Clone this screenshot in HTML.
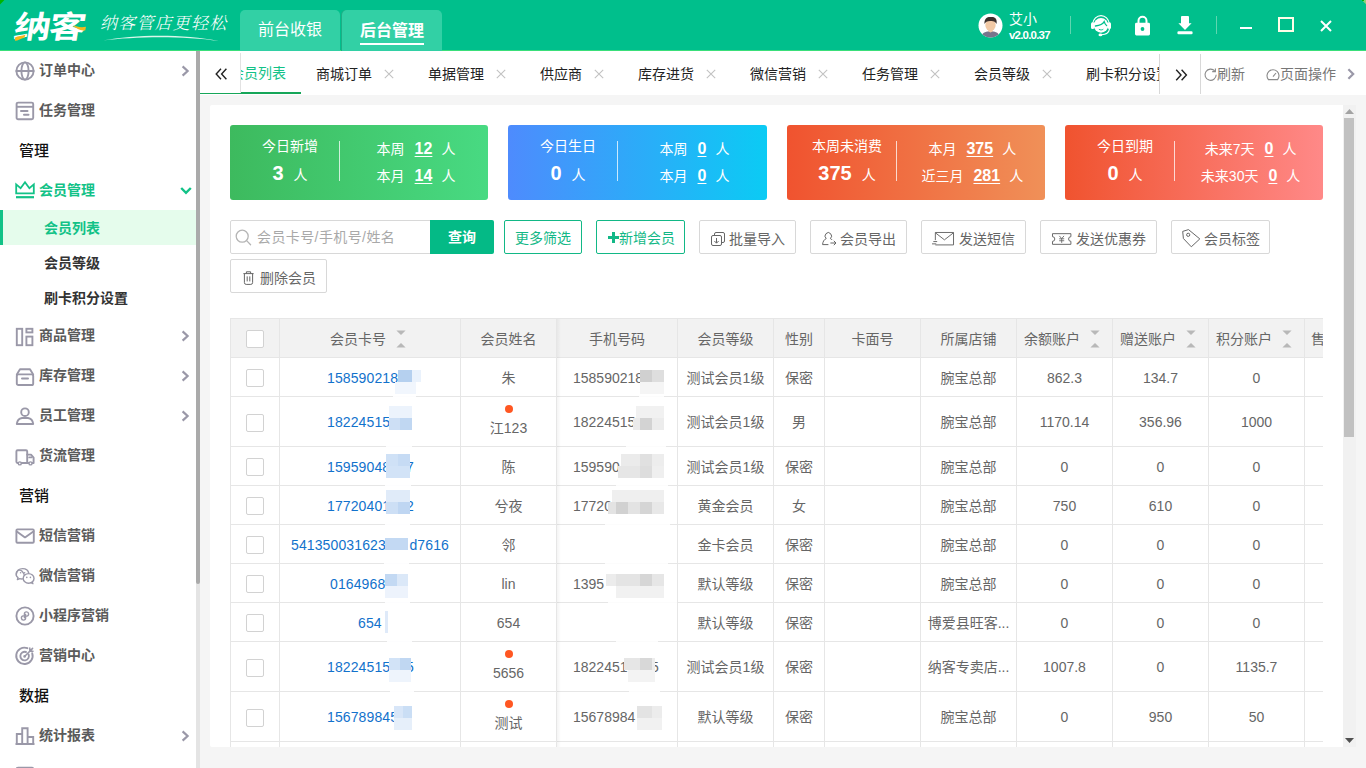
<!DOCTYPE html>
<html lang="zh-CN">
<head>
<meta charset="utf-8">
<title>纳客 - 会员列表</title>
<style>
*{box-sizing:border-box;margin:0;padding:0}
html,body{width:1366px;height:768px;overflow:hidden;background:#f5f5f5}
body{font-family:"Liberation Sans","Noto Sans CJK SC",sans-serif;font-size:14px;color:#666;position:relative}
.abs{position:absolute}
svg{display:block;overflow:visible}
/* header */
#hd{position:absolute;left:0;top:0;width:1366px;height:51px;background:#00bf8c;border-bottom:1px solid #3adf7a}
.logo{position:absolute;left:14px;top:6px;font-size:37px;line-height:44px;font-weight:700;color:#fff;letter-spacing:-2px;font-family:"Liberation Sans","Noto Sans CJK SC",sans-serif;transform:skewX(-9deg) scaleY(.84);transform-origin:left center;white-space:nowrap}
.slogan{position:absolute;left:100px;top:12px;font-size:17px;line-height:24px;color:#fff;font-family:"Liberation Serif","Noto Serif CJK SC",serif;font-style:italic;letter-spacing:1.2px;font-weight:300;white-space:nowrap}
.htab{position:absolute;top:10px;height:41px;width:99px;border-radius:5px 5px 0 0;color:#fff;font-size:16px;line-height:40px;text-align:center}
.htab span{display:inline-block;line-height:22px}
.uname{position:absolute;left:1009px;top:9px;font-size:14px;line-height:20px;color:#fff}
.uver{position:absolute;left:1009px;top:28px;font-size:11.5px;line-height:14px;color:#fff;font-weight:700;letter-spacing:-.8px}
.hsep{position:absolute;top:16px;width:1px;height:18px;background:#5fd6b0}
/* sidebar */
#sb{position:absolute;left:0;top:51px;width:196px;height:717px;background:#fff;overflow:hidden}
.mi{position:absolute;left:0;width:196px;height:40px;line-height:40px;font-weight:700;color:#5a5a5a;font-size:14px;padding-left:39px;white-space:nowrap}
.mi svg{position:absolute;left:15px;top:11px}
.mh{position:absolute;left:19px;height:40px;line-height:41px;font-weight:500;color:#111;font-size:15px}
.ms{position:absolute;left:0;width:196px;height:35px;line-height:37px;font-weight:700;color:#333;font-size:14px;padding-left:44px}
.mi svg.arr{position:absolute;left:180px;top:15px}
/* tab bar */
#tb{position:absolute;left:200px;top:51px;width:1166px;height:44px;background:#fff}
.tab{position:absolute;top:1.5px;height:43px;line-height:43px;font-size:14px;color:#222;white-space:nowrap}
.tx{position:absolute;top:16.5px}

/* main */
#pn{position:absolute;left:210px;top:105px;width:1133px;height:642px;background:#fff;border-radius:2px 0 0 2px;overflow:hidden}
.card{position:absolute;top:20px;height:75px;border-radius:3px;color:#fff;font-size:14px}
.card div{position:absolute;white-space:nowrap;line-height:20px}
.card b{font-weight:700;font-size:20px;margin-right:10px}
.card u{font-weight:700;font-size:16px;text-decoration:underline;text-underline-offset:2px;margin:0 9px 0 10px}
.card i{position:absolute;left:109px;top:16px;width:1px;height:40px;background:rgba(255,255,255,.75)}
.btn{position:absolute;height:34px;line-height:36px;border:1px solid #d8d8d8;border-radius:2px;background:#fff;color:#666;font-size:14px;white-space:nowrap;padding-left:29px}
.btn svg{position:absolute;top:8px;left:11px}
.btn.g{border-color:#12b886;color:#12b886;padding:0;text-align:center;font-size:13px}
/* table */
#tbl{position:absolute;left:20px;top:213px;width:1093px;height:429px;border-left:1px solid #e6e6e6;border-top:1px solid #e6e6e6;overflow:hidden}
.tr{position:absolute;left:0;width:1200px;border-bottom:1px solid #e6e6e6}
.tr.h{background:#f2f2f2;height:39px;top:0}
.td{position:absolute;top:0;height:100%;border-right:1px solid #e6e6e6;text-align:center;font-size:14px;color:#666;white-space:nowrap;overflow:hidden}
.td span{position:absolute;left:0;right:0;top:50%;margin-top:-9px;line-height:20px}
.tr.t .td span{margin-top:-10px}
.td em{display:inline-block;height:1px}
#mos p{position:absolute}
.td a{color:#1272cc;letter-spacing:.12px}
.ck{position:absolute;left:15px;top:50%;margin-top:-8px;width:18px;height:18px;border:1px solid #d2d2d2;border-radius:2px;background:#fff}
.dot{position:absolute;left:50%;margin-left:-4px;top:8px;width:8px;height:8px;border-radius:50%;background:#ff5722}
.sort{position:absolute;top:11px}
</style>
</head>
<body>
<div id="hd">
  <div class="logo">纳客</div>
  <svg class="abs" style="left:14px;top:24px" width="74" height="18" viewBox="0 0 74 18"><path d="M1 13.6 C4 11.6 8 12.4 11.6 10.6 L10.4 13.4 C7 14.4 4 16.6 1 16.8Z" fill="#f5b81f"/><path d="M59 1.8 C62 1.4 65 4.4 72 2.8 L71.2 6.4 C66 7.4 63 4.4 59 1.8Z" fill="#f5b81f"/></svg>
  <div class="slogan">纳客管店更轻松</div>
  <svg class="abs" style="left:103px;top:34px" width="118" height="8" viewBox="0 0 118 8"><path d="M0 6.5 C30 0.5 80 -0.5 116 7 C80 1.5 30 2.5 0 6.5Z" fill="#d9f7ea"/></svg>
  <div class="htab" style="left:240px;width:100px;background:#32d0a5">前台收银</div>
  <div class="htab" style="left:342px;width:100px;background:#32d0a5;font-weight:700;box-shadow:-1px 0 0 #1fae84"><span style="border-bottom:2px solid #fff;height:25px;position:relative;top:1px">后台管理</span></div>
  <!-- avatar -->
  <svg class="abs" style="left:978px;top:13px" width="25" height="25" viewBox="0 0 25 25">
    <defs><clipPath id="avc"><circle cx="12.5" cy="12.5" r="12"/></clipPath></defs>
    <circle cx="12.5" cy="12.5" r="12" fill="#fff"/>
    <g clip-path="url(#avc)">
      <rect x="10.3" y="15" width="4.4" height="5" fill="#f2c9a5"/><path d="M3 25 C3 19.5 8 18.6 10.4 18.4 L12.5 19.6 L14.6 18.4 C17 18.6 22 19.5 22 25Z" fill="#77758c"/>
      <ellipse cx="12.5" cy="12" rx="5.2" ry="6" fill="#f2c9a5"/>
      <path d="M6.5 11 C6 5 10 3.5 13 4 C17 3.5 19.5 6 18.5 11 C17.5 8.5 15 7.5 12 8 C9 8 7.5 9 6.5 11Z" fill="#3b2f2c"/>
    </g>
  </svg>
  <div class="uname">艾小</div>
  <div class="uver">v2.0.0.37</div>

  <!-- headset -->
  <svg class="abs" style="left:1090px;top:13px" width="22" height="24" viewBox="0 0 22 24" fill="none">
    <path d="M2.6 11 A8.5 10 0 0 1 19.4 11" stroke="#fff" stroke-width="1.2"/>
    <circle cx="11" cy="12.4" r="7.3" fill="#fff"/>
    <rect x="1" y="9.2" width="3.2" height="6.8" rx="1.5" fill="#fff"/>
    <rect x="17.8" y="9.2" width="3.2" height="6.8" rx="1.5" fill="#fff"/>
    <path d="M5.4 13 C8.6 12.6 12.6 11.6 14.2 8.6 C14.8 10.6 15.8 12 16.6 12.6" stroke="#00bf8c" stroke-width="1.3" stroke-linecap="round"/>
    <path d="M9.2 16.4 C10.4 17.2 11.8 17.2 13 16.4" stroke="#00bf8c" stroke-width=".9" stroke-linecap="round"/>
    <path d="M19.6 15.6 C19 19.4 15.6 21.6 11.4 21.8" stroke="#fff" stroke-width="1.1"/>
    <ellipse cx="10.4" cy="21.9" rx="1.9" ry="1.4" fill="#fff"/>
  </svg>
  <!-- lock -->
  <svg class="abs" style="left:1135px;top:15px" width="15" height="21" viewBox="0 0 15 21" fill="none">
    <path d="M3.5 9 V5.8 a4 4 0 0 1 8 0 V9" stroke="#fff" stroke-width="2"/>
    <rect x="0" y="7.8" width="15" height="12.7" rx="1.4" fill="#fff"/>
    <circle cx="7.5" cy="14" r="1.9" fill="#00bf8c"/>
  </svg>
  <!-- download -->
  <svg class="abs" style="left:1177px;top:16px" width="16" height="19" viewBox="0 0 16 19">
    <path d="M5 0 h6 a1 1 0 0 1 1 1 v6.3 h2.6 L8 14 L1.4 7.3 h2.6 v-6.3 a1 1 0 0 1 1 -1Z" fill="#fff"/>
    <rect x=".4" y="15.3" width="15.2" height="2.9" rx="1.2" fill="#fff"/>
  </svg>
  <!-- window controls -->
  <div class="abs" style="left:1240px;top:27px;width:12px;height:2px;background:#fff"></div>
  <div class="abs" style="left:1278px;top:17px;width:16px;height:15px;border:2px solid #fffde8"></div>
  <svg class="abs" style="left:1320px;top:20px" width="12" height="12" viewBox="0 0 12 12"><path d="M1 1 L11 11 M11 1 L1 11" stroke="#fff" stroke-width="2"/></svg>
  <div class="hsep" style="left:1070px"></div>
  <div class="hsep" style="left:1216px"></div>
</div>

<svg class="abs" style="left:0;top:0" width="5" height="5" viewBox="0 0 5 5"><path d="M0 0 H4.4 L0 4.4Z" fill="#00b400"/></svg>
<svg class="abs" style="left:1361px;top:0" width="5" height="5" viewBox="0 0 5 5"><path d="M.8 0 H5 V4.2Z" fill="#8fd07a"/><rect x="1" y="0" width="2" height="1" fill="#00b400"/></svg>
<div id="sb">
  <div class="mi" style="top:-1px"><svg width="20" height="20" viewBox="0 0 20 20" fill="none" stroke="#9a98a8" stroke-width="1.9" stroke-linecap="round" stroke-linejoin="round"><circle cx="10" cy="10" r="8.6"/><ellipse cx="10" cy="10" rx="3.6" ry="8.6"/><path d="M1.4 10 H18.6"/></svg>订单中心<svg class="arr" width="10" height="12" viewBox="0 0 10 12" fill="none" stroke="#9a98a8" stroke-width="2.2"><path d="M2.6 1.4 L7.6 6 L2.6 10.6"/></svg></div>
  <div class="mi" style="top:39px"><svg width="20" height="20" viewBox="0 0 20 20" fill="none" stroke="#9a98a8" stroke-width="1.9" stroke-linecap="round" stroke-linejoin="round"><rect x="1.6" y="1.6" width="16.6" height="16.6" rx="1.5"/><path d="M1.6 5.8 H18.2" stroke-linecap="butt"/><path d="M6 10 H12.5 M9 13.8 H13.5" stroke-width="2"/></svg>任务管理</div>
  <div class="mh" style="top:79px">管理</div>
  <div class="mi" style="top:119px;color:#12c287"><svg width="20" height="20" viewBox="0 0 20 20" fill="none" stroke="#9a98a8" stroke-width="1.9" stroke-linecap="round" stroke-linejoin="round"><path d="M1.2 12.4 V3.4 L5.6 7.2 L10 1.2 L14.4 7.2 L18.8 3.4 V12.4 Z" stroke="#12c287" stroke-linejoin="miter" stroke-width="1.8"/><path d="M1 16.2 H19" stroke="#12c287" stroke-width="2.2" stroke-linecap="butt"/></svg>会员管理<svg class="arr" style="top:16px" width="12" height="10" viewBox="0 0 12 10" fill="none" stroke="#12c287" stroke-width="2.4"><path d="M1.2 2 L6 6.8 L10.8 2"/></svg></div>
  <div class="ms" style="top:159.0px;background:#e5fcec;color:#12c287;border-left:3px solid #12c287;padding-left:41px">会员列表</div>
  <div class="ms" style="top:194.0px">会员等级</div>
  <div class="ms" style="top:229.0px">刷卡积分设置</div>
  <div class="mi" style="top:264px"><svg width="20" height="20" viewBox="0 0 20 20" fill="none" stroke="#9a98a8" stroke-width="1.9" stroke-linecap="round" stroke-linejoin="round" style="stroke-linejoin:miter;top:12px"><rect x="1.8" y="1.8" width="5.4" height="16.4"/><rect x="11.4" y="1.8" width="6" height="3.6"/><rect x="11.4" y="9.6" width="6" height="8.6"/></svg>商品管理<svg class="arr" width="10" height="12" viewBox="0 0 10 12" fill="none" stroke="#9a98a8" stroke-width="2.2"><path d="M2.6 1.4 L7.6 6 L2.6 10.6"/></svg></div>
  <div class="mi" style="top:304px"><svg style="top:12px" width="20" height="20" viewBox="0 0 20 20" fill="none" stroke="#9a98a8" stroke-width="1.9" stroke-linecap="round" stroke-linejoin="round"><path d="M1.8 7.4 L5 2.2 H15 L18.2 7.4"/><rect x="1.8" y="7.4" width="16.4" height="10.6" rx="1.6"/><path d="M7 11.6 H13" stroke-width="2"/></svg>库存管理<svg class="arr" width="10" height="12" viewBox="0 0 10 12" fill="none" stroke="#9a98a8" stroke-width="2.2"><path d="M2.6 1.4 L7.6 6 L2.6 10.6"/></svg></div>
  <div class="mi" style="top:344px"><svg width="20" height="20" viewBox="0 0 20 20" fill="none" stroke="#9a98a8" stroke-width="1.9" stroke-linecap="round" stroke-linejoin="round"><circle cx="10" cy="6.2" r="3.8"/><path d="M1.8 18 C2.4 13.6 5.4 12.2 7 12 H13 C14.6 12.2 17.6 13.6 18.2 18 Z"/></svg>员工管理<svg class="arr" width="10" height="12" viewBox="0 0 10 12" fill="none" stroke="#9a98a8" stroke-width="2.2"><path d="M2.6 1.4 L7.6 6 L2.6 10.6"/></svg></div>
  <div class="mi" style="top:384px"><svg style="top:12px" width="20" height="20" viewBox="0 0 20 20" fill="none" stroke="#9a98a8" stroke-width="1.9" stroke-linecap="round" stroke-linejoin="round"><path d="M3 16 H2.6 a1.2 1.2 0 0 1 -1.2 -1.2 V4.4 a1.2 1.2 0 0 1 1.2 -1.2 H11 a1.2 1.2 0 0 1 1.2 1.2 V16 H6.6"/><path d="M12.2 7.6 H16 L18.6 10.6 V16 H17.6 M13.4 16 H12.2"/><path d="M14.2 10.4 h2.2" /><circle cx="4.8" cy="16.4" r="1.5" stroke-width="1.4"/><circle cx="15.5" cy="16.4" r="1.5" stroke-width="1.4"/></svg>货流管理</div>
  <div class="mh" style="top:424px">营销</div>
  <div class="mi" style="top:464px"><svg width="20" height="20" viewBox="0 0 20 20" fill="none" stroke="#9a98a8" stroke-width="1.9" stroke-linecap="round" stroke-linejoin="round"><rect x="1.4" y="3.4" width="17.4" height="13.4" rx="1"/><path d="M1.8 5.4 L10 11.4 L18.4 5.4"/></svg>短信营销</div>
  <div class="mi" style="top:504px"><svg width="20" height="20" viewBox="0 0 20 20" fill="none" stroke="#9a98a8" stroke-width="1.9" stroke-linecap="round" stroke-linejoin="round"><path d="M9.6 11.6 C9.4 8 5.6 2.4 2 6.6 C0.4 9.4 1.6 11.6 3 12.6 L2.4 14.6 L4.8 13.6 C5.6 13.9 6.6 14 7.6 13.9" stroke-width="1.4" transform="translate(0,-1)"/><path d="M1.4 8.2 C1.4 4.8 4.2 2.6 7.6 2.6 C10.6 2.6 13.2 4.4 13.7 7" stroke-width="1.4"/><ellipse cx="13.6" cy="12.4" rx="5.4" ry="4.8" stroke-width="1.4" fill="#fff"/><path d="M15.8 16.6 L18 17.8 L17.4 15.8" stroke-width="1.2"/><circle cx="5.6" cy="6.8" r=".8" fill="#9a98a8" stroke="none"/><circle cx="9.6" cy="6.8" r=".8" fill="#9a98a8" stroke="none"/><circle cx="11.8" cy="11.4" r=".8" fill="#9a98a8" stroke="none"/><circle cx="15.4" cy="11.4" r=".8" fill="#9a98a8" stroke="none"/></svg>微信营销</div>
  <div class="mi" style="top:544px"><svg width="20" height="20" viewBox="0 0 20 20" fill="none" stroke="#9a98a8" stroke-width="1.9" stroke-linecap="round" stroke-linejoin="round"><circle cx="10" cy="10" r="8.6"/><path d="M10.6 8.4 V12 a2.1 2.1 0 1 1 -2.4 -2.1 M9.4 11.6 V8 a2.1 2.1 0 1 1 2.4 2.1" stroke-width="1.4"/></svg>小程序营销</div>
  <div class="mi" style="top:584px"><svg width="20" height="20" viewBox="0 0 20 20" fill="none" stroke="#9a98a8" stroke-width="1.9" stroke-linecap="round" stroke-linejoin="round"><path d="M17.2 7.2 A8.2 8.2 0 1 1 12.4 2.2"/><path d="M13.6 8.4 A4.3 4.3 0 1 1 11 6"/><circle cx="9.6" cy="10.4" r="1.3" fill="#9a98a8" stroke="none"/><path d="M9.8 10.2 L17.6 2.4 M14.8 2 V5.2 H18" stroke-width="1.5"/></svg>营销中心</div>
  <div class="mh" style="top:624px">数据</div>
  <div class="mi" style="top:664px"><svg width="20" height="20" viewBox="0 0 20 20" fill="none" stroke="#9a98a8" stroke-width="1.9" stroke-linecap="round" stroke-linejoin="round"><path d="M1.8 18 V8 H7.2 V2.2 H12.6 V18 M12.6 11 H18.2 V18 M7.2 8 V18 M1.2 18 H18.8" stroke-linejoin="miter"/></svg>统计报表<svg class="arr" width="10" height="12" viewBox="0 0 10 12" fill="none" stroke="#9a98a8" stroke-width="2.2"><path d="M2.6 1.4 L7.6 6 L2.6 10.6"/></svg></div>
  <div class="mi" style="top:704px"><svg width="20" height="20" viewBox="0 0 20 20" fill="none" stroke="#9a98a8" stroke-width="1.9" stroke-linecap="round" stroke-linejoin="round"><rect x="1.6" y="1.6" width="16.6" height="16.6" rx="1.5"/><path d="M1.6 5.8 H18.2" stroke-linecap="butt"/><path d="M6 10 H12.5 M9 13.8 H13.5" stroke-width="2"/></svg><svg class="arr" width="10" height="12" viewBox="0 0 10 12" fill="none" stroke="#9a98a8" stroke-width="2.2"><path d="M2.6 1.4 L7.6 6 L2.6 10.6"/></svg></div>
</div>
<div class="abs" style="left:196px;top:51px;width:4px;height:717px;background:#e4e4e4"></div>
<div class="abs" style="left:196px;top:51px;width:4px;height:533px;background:#aaa;border-radius:0 0 2px 2px"></div>

<div id="tb">
  <div class="abs" style="left:0;top:0;width:960px;height:43px;overflow:hidden">
    <div class="tab" style="left:15px;top:1px;width:86px;padding-left:15px;color:#12c287">会员列表</div>
    <div class="tab" style="left:101px;width:112px;padding-left:15px">商城订单<svg class="tx" style="left:83px" width="10" height="10" viewBox="0 0 10 10"><path d="M.8 .8 L9.2 9.2 M9.2 .8 L.8 9.2" stroke="#c2c2c2" stroke-width="1.1"/></svg></div>
    <div class="tab" style="left:213px;width:112px;padding-left:15px">单据管理<svg class="tx" style="left:83px" width="10" height="10" viewBox="0 0 10 10"><path d="M.8 .8 L9.2 9.2 M9.2 .8 L.8 9.2" stroke="#c2c2c2" stroke-width="1.1"/></svg></div>
    <div class="tab" style="left:325px;width:98px;padding-left:15px">供应商<svg class="tx" style="left:69px" width="10" height="10" viewBox="0 0 10 10"><path d="M.8 .8 L9.2 9.2 M9.2 .8 L.8 9.2" stroke="#c2c2c2" stroke-width="1.1"/></svg></div>
    <div class="tab" style="left:423px;width:112px;padding-left:15px">库存进货<svg class="tx" style="left:83px" width="10" height="10" viewBox="0 0 10 10"><path d="M.8 .8 L9.2 9.2 M9.2 .8 L.8 9.2" stroke="#c2c2c2" stroke-width="1.1"/></svg></div>
    <div class="tab" style="left:535px;width:112px;padding-left:15px">微信营销<svg class="tx" style="left:83px" width="10" height="10" viewBox="0 0 10 10"><path d="M.8 .8 L9.2 9.2 M9.2 .8 L.8 9.2" stroke="#c2c2c2" stroke-width="1.1"/></svg></div>
    <div class="tab" style="left:647px;width:112px;padding-left:15px">任务管理<svg class="tx" style="left:83px" width="10" height="10" viewBox="0 0 10 10"><path d="M.8 .8 L9.2 9.2 M9.2 .8 L.8 9.2" stroke="#c2c2c2" stroke-width="1.1"/></svg></div>
    <div class="tab" style="left:759px;width:112px;padding-left:15px">会员等级<svg class="tx" style="left:83px" width="10" height="10" viewBox="0 0 10 10"><path d="M.8 .8 L9.2 9.2 M9.2 .8 L.8 9.2" stroke="#c2c2c2" stroke-width="1.1"/></svg></div>
    <div class="tab" style="left:871px;width:140px;padding-left:15px">刷卡积分设置<svg class="tx" style="left:111px" width="10" height="10" viewBox="0 0 10 10"><path d="M.8 .8 L9.2 9.2 M9.2 .8 L.8 9.2" stroke="#c2c2c2" stroke-width="1.1"/></svg></div>
  </div>
  <div class="abs" style="left:0;top:41px;width:101px;height:2px;background:#16a659"></div>
  <div class="abs" style="left:0;top:0;width:41px;height:42px;background:#fff"></div><div class="abs" style="left:40px;top:2px;width:1px;height:40px;background:#e2e2e2"></div>
  <svg class="abs" style="left:15px;top:16.5px" width="13" height="12" viewBox="0 0 13 12" fill="none" stroke="#222" stroke-width="1.4"><path d="M6 .8 L1.2 6 L6 11.2 M11.4 .8 L6.6 6 L11.4 11.2"/></svg>
  <div class="abs" style="left:959px;top:3px;width:42px;height:40px;background:#fff;border-left:1px solid #d8d8d8;border-right:1px solid #d8d8d8"></div>
  <svg class="abs" style="left:974.5px;top:17.5px" width="13" height="12" viewBox="0 0 13 12" fill="none" stroke="#222" stroke-width="1.4"><path d="M1.2 .8 L6 6 L1.2 11.2 M6.6 .8 L11.4 6 L6.6 11.2"/></svg>
  <svg class="abs" style="left:1003.5px;top:16.5px" width="13" height="13" viewBox="0 0 13 13" fill="none" stroke="#8a8a8a" stroke-width="1.1"><path d="M10.8 3 A5.6 5.6 0 1 0 12.2 6.8"/><path d="M11.4 .4 V3.6 H8.2" /></svg>
  <div class="tab" style="left:1017px;top:1.5px;color:#777">刷新</div>
  <svg class="abs" style="left:1066px;top:17px" width="14" height="13" viewBox="0 0 14 13" fill="none" stroke="#8a8a8a" stroke-width="1.1"><path d="M2.4 11.6 A6 6 0 1 1 11.6 11.6 Z"/><path d="M7 8.6 L10 5"/></svg>
  <div class="tab" style="left:1080px;top:1.5px;color:#777">页面操作</div>
  <svg class="abs" style="left:1146.5px;top:16.5px" width="8" height="12" viewBox="0 0 8 12" fill="none" stroke="#9a98a8" stroke-width="2.2"><path d="M1.4 1.2 L6.2 6 L1.4 10.8"/></svg>
</div>

<div id="pn">
  <div class="card" style="left:20px;width:258px;background:linear-gradient(90deg,#3dba5e,#48da82)"><div style="left:0;width:120px;text-align:center;top:11px">今日新增</div><div style="left:0;width:120px;text-align:center;top:38px"><b>3</b>人</div><i></i><div style="left:106px;width:160px;text-align:center;top:14px">本周<u>12</u>人</div><div style="left:106px;width:160px;text-align:center;top:41px">本月<u>14</u>人</div></div>
  <div class="card" style="left:298px;width:259px;background:linear-gradient(90deg,#4e8bfd,#0bcbf4)"><div style="left:0;width:120px;text-align:center;top:11px">今日生日</div><div style="left:0;width:120px;text-align:center;top:38px"><b>0</b>人</div><i></i><div style="left:106.5px;width:160px;text-align:center;top:14px">本周<u>0</u>人</div><div style="left:106.5px;width:160px;text-align:center;top:41px">本月<u>0</u>人</div></div>
  <div class="card" style="left:577px;width:258px;background:linear-gradient(90deg,#f0532f,#f09058)"><div style="left:0;width:120px;text-align:center;top:11px">本周未消费</div><div style="left:0;width:120px;text-align:center;top:38px"><b>375</b>人</div><i></i><div style="left:105.30000000000001px;width:160px;text-align:center;top:14px">本月<u>375</u>人</div><div style="left:105.30000000000001px;width:160px;text-align:center;top:41px">近三月<u>281</u>人</div></div>
  <div class="card" style="left:855px;width:258px;background:linear-gradient(90deg,#f0532f,#ff8988)"><div style="left:0;width:120px;text-align:center;top:11px">今日到期</div><div style="left:0;width:120px;text-align:center;top:38px"><b>0</b>人</div><i></i><div style="left:105.6px;width:160px;text-align:center;top:14px">未来7天<u>0</u>人</div><div style="left:105.6px;width:160px;text-align:center;top:41px">未来30天<u>0</u>人</div></div>
  <div class="abs" style="left:20px;top:115px;width:201px;height:34px;border:1px solid #d8d8d8;border-radius:2px 0 0 2px;color:#a9a9a9;line-height:32px;padding-left:26px;white-space:nowrap;letter-spacing:.4px">会员卡号/手机号/姓名
    <svg class="abs" style="left:4px;top:8px" width="17" height="17" viewBox="0 0 17 17" fill="none" stroke="#b5b5b5" stroke-width="1.3"><circle cx="7.2" cy="7.2" r="6"/><path d="M11.6 11.6 L15.6 15.8" stroke-linecap="round"/></svg></div>
  <div class="abs" style="left:220px;top:115px;width:64px;height:34px;background:#04ba86;border-radius:0 2px 2px 0;color:#fff;font-weight:700;text-align:center;line-height:34px">查询</div>
  <div class="btn g" style="left:294px;top:115px;width:78px;height:34px;line-height:34px;font-size:14px">更多筛选</div>
  <div class="btn g" style="left:386px;top:115px;width:89px;height:34px;line-height:34px;font-size:14px;padding-left:22px;text-align:left"><svg style="left:11px;top:11px" width="11" height="11" viewBox="0 0 11 11"><path d="M4 0 h3 v4 h4 v3 h-4 v4 h-3 v-4 h-4 v-3 h4Z" fill="#12b886"/></svg>新增会员</div>
  <div class="btn" style="left:489px;top:115px;width:97px"><svg style="left:11px;top:11px" width="14" height="14" viewBox="0 0 14 14" fill="none" stroke="#666" stroke-width="1"><rect x=".5" y="3.5" width="10" height="10" rx="1.5"/><path d="M3.5 3.5 V2 a1.5 1.5 0 0 1 1.5 -1.5 H12 a1.5 1.5 0 0 1 1.5 1.5 V9 a1.5 1.5 0 0 1 -1.5 1.5 H10.5"/><path d="M5.5 6 V11 M3.4 9 L5.5 11.2 L7.6 9"/></svg>批量导入</div>
  <div class="btn" style="left:600px;top:115px;width:97px"><svg style="left:11px;top:11px" width="15" height="14" viewBox="0 0 15 14" fill="none" stroke="#666" stroke-width="1"><path d="M4.2 6.6 A3.2 3.4 0 1 1 8.4 6.6 M4.2 6.6 C2 7.6 .8 9.6 .6 12.6 H6.4 M8.4 6.6 C9.2 7 9.8 7.4 10.2 8"/><path d="M8.4 11 H14 M11.8 8.8 L14 11 L11.8 13.2"/></svg>会员导出</div>
  <div class="btn" style="left:711px;top:115px;width:105px;padding-left:37px"><svg style="left:10px;top:11px" width="22" height="13.4" viewBox="0 0 23 14" fill="none" stroke="#666" stroke-width="1"><path d="M3.5 8.5 V.5 H22.5 V13.5 H3.5"/><path d="M3.5 .8 L13 8.2 L22.5 .8"/><path d="M1.4 10 H5.4 M0 12.4 H4.4"/></svg>发送短信</div>
  <div class="btn" style="left:830px;top:115px;width:117px;padding-left:35px"><svg style="left:10.5px;top:11.5px" width="19.4" height="12" viewBox="0 0 20 12" fill="none" stroke="#666" stroke-width="1"><path d="M.5 .5 H19.5 V3.6 a2.4 2.4 0 0 0 0 4.8 V11.5 H.5 V8.4 a2.4 2.4 0 0 0 0 -4.8Z"/><path d="M7.6 2.8 L10 5.6 L12.4 2.8 M7.4 5.8 H12.6 M7.4 7.8 H12.6 M10 5.6 V10" stroke-width=".9"/></svg>发送优惠券</div>
  <div class="btn" style="left:961px;top:115px;width:99px;padding-left:32px"><svg style="left:9.5px;top:7.5px" width="19" height="19" viewBox="0 0 19 19" fill="none" stroke="#666" stroke-width="1" stroke-linejoin="round"><path d="M.7 2.4 L6.5 .6 L17.8 9.9 L9.3 17.8 L1.4 9.5Z"/><circle cx="6.2" cy="5.8" r="1.6"/></svg>会员标签</div>
  <div class="btn" style="left:20px;top:154px;width:97px;height:34px;line-height:36px"><svg style="left:11.5px;top:11px" width="11" height="14" viewBox="0 0 11 14" fill="none" stroke="#666" stroke-width="1"><path d="M.4 2.6 H10.6 M3.4 2.4 V.8 H7.6 V2.4"/><path d="M1.4 2.8 V11.6 a1.8 1.8 0 0 0 1.8 1.8 H7.8 a1.8 1.8 0 0 0 1.8 -1.8 V2.8"/><path d="M4.2 5.4 V10.4 M6.8 5.4 V10.4"/></svg>删除会员</div>
  
  <div id="tbl">
    <div class="tr h"><div class="td" style="left:0px;width:49px"><b class="ck"></b></div><div class="td" style="left:49px;width:181px"><span style="padding-right:24px">会员卡号</span><svg class="sort" style="left:116px" width="10" height="18" viewBox="0 0 10 18"><path d="M.4 .5 H9.6 L5 5Z M.4 17.5 H9.6 L5 13Z" fill="#b8b8b8"/></svg></div><div class="td" style="left:230px;width:96px"><span>会员姓名</span></div><div class="td" style="left:326px;width:121px"><span>手机号码</span></div><div class="td" style="left:447px;width:96px"><span>会员等级</span></div><div class="td" style="left:543px;width:51px"><span>性别</span></div><div class="td" style="left:594px;width:96px"><span>卡面号</span></div><div class="td" style="left:690px;width:96px"><span>所属店铺</span></div><div class="td" style="left:786px;width:96px"><span style="text-align:left;left:7px">余额账户</span><svg class="sort" style="left:73px" width="10" height="18" viewBox="0 0 10 18"><path d="M.4 .5 H9.6 L5 5Z M.4 17.5 H9.6 L5 13Z" fill="#b8b8b8"/></svg></div><div class="td" style="left:882px;width:96px"><span style="text-align:left;left:7px">赠送账户</span><svg class="sort" style="left:73px" width="10" height="18" viewBox="0 0 10 18"><path d="M.4 .5 H9.6 L5 5Z M.4 17.5 H9.6 L5 13Z" fill="#b8b8b8"/></svg></div><div class="td" style="left:978px;width:96px"><span style="text-align:left;left:7px">积分账户</span><svg class="sort" style="left:73px" width="10" height="18" viewBox="0 0 10 18"><path d="M.4 .5 H9.6 L5 5Z M.4 17.5 H9.6 L5 13Z" fill="#b8b8b8"/></svg></div><div class="td" style="left:1074px;width:96px"><span style="text-align:left;left:6px">售</span></div></div>
    <div class="tr" style="top:39px;height:39px"><div class="td" style="left:0px;width:49px"><b class="ck"></b></div><div class="td" style="left:49px;width:181px"><span style="text-align:left;left:47px"><a>158590218</a></span></div><div class="td" style="left:230px;width:96px"><span>朱</span></div><div class="td" style="left:326px;width:121px"><span style="text-align:left;left:16px">158590218</span></div><div class="td" style="left:447px;width:96px"><span>测试会员1级</span></div><div class="td" style="left:543px;width:51px"><span>保密</span></div><div class="td" style="left:594px;width:96px"></div><div class="td" style="left:690px;width:96px"><span>腕宝总部</span></div><div class="td" style="left:786px;width:96px"><span>862.3</span></div><div class="td" style="left:882px;width:96px"><span>134.7</span></div><div class="td" style="left:978px;width:96px"><span>0</span></div><div class="td" style="left:1074px;width:96px"></div></div>
    <div class="tr t" style="top:78px;height:50px"><div class="td" style="left:0px;width:49px"><b class="ck"></b></div><div class="td" style="left:49px;width:181px"><span style="text-align:left;left:47px"><a>18224515</a></span></div><div class="td" style="left:230px;width:96px"><b class="dot"></b><span style="margin-top:-4px">江123</span></div><div class="td" style="left:326px;width:121px"><span style="text-align:left;left:16px">182245155</span></div><div class="td" style="left:447px;width:96px"><span>测试会员1级</span></div><div class="td" style="left:543px;width:51px"><span>男</span></div><div class="td" style="left:594px;width:96px"></div><div class="td" style="left:690px;width:96px"><span>腕宝总部</span></div><div class="td" style="left:786px;width:96px"><span>1170.14</span></div><div class="td" style="left:882px;width:96px"><span>356.96</span></div><div class="td" style="left:978px;width:96px"><span>1000</span></div><div class="td" style="left:1074px;width:96px"></div></div>
    <div class="tr" style="top:128px;height:39px"><div class="td" style="left:0px;width:49px"><b class="ck"></b></div><div class="td" style="left:49px;width:181px"><span style="text-align:left;left:47px"><a>15959048<em style="width:15.8px"></em>7</a></span></div><div class="td" style="left:230px;width:96px"><span>陈</span></div><div class="td" style="left:326px;width:121px"><span style="text-align:left;left:16px">1595904</span></div><div class="td" style="left:447px;width:96px"><span>测试会员1级</span></div><div class="td" style="left:543px;width:51px"><span>保密</span></div><div class="td" style="left:594px;width:96px"></div><div class="td" style="left:690px;width:96px"><span>腕宝总部</span></div><div class="td" style="left:786px;width:96px"><span>0</span></div><div class="td" style="left:882px;width:96px"><span>0</span></div><div class="td" style="left:978px;width:96px"><span>0</span></div><div class="td" style="left:1074px;width:96px"></div></div>
    <div class="tr" style="top:167px;height:39px"><div class="td" style="left:0px;width:49px"><b class="ck"></b></div><div class="td" style="left:49px;width:181px"><span style="text-align:left;left:47px"><a>17720401<em style="width:15.8px"></em>2</a></span></div><div class="td" style="left:230px;width:96px"><span>兮夜</span></div><div class="td" style="left:326px;width:121px"><span style="text-align:left;left:16px">17720</span></div><div class="td" style="left:447px;width:96px"><span>黄金会员</span></div><div class="td" style="left:543px;width:51px"><span>女</span></div><div class="td" style="left:594px;width:96px"></div><div class="td" style="left:690px;width:96px"><span>腕宝总部</span></div><div class="td" style="left:786px;width:96px"><span>750</span></div><div class="td" style="left:882px;width:96px"><span>610</span></div><div class="td" style="left:978px;width:96px"><span>0</span></div><div class="td" style="left:1074px;width:96px"></div></div>
    <div class="tr" style="top:206px;height:39px"><div class="td" style="left:0px;width:49px"><b class="ck"></b></div><div class="td" style="left:49px;width:181px"><span style="text-align:left;left:11px"><a>541350031623<em style="width:23.6px"></em>d7616</a></span></div><div class="td" style="left:230px;width:96px"><span>邻</span></div><div class="td" style="left:326px;width:121px"><span style="text-align:left;left:16px"></span></div><div class="td" style="left:447px;width:96px"><span>金卡会员</span></div><div class="td" style="left:543px;width:51px"><span>保密</span></div><div class="td" style="left:594px;width:96px"></div><div class="td" style="left:690px;width:96px"><span>腕宝总部</span></div><div class="td" style="left:786px;width:96px"><span>0</span></div><div class="td" style="left:882px;width:96px"><span>0</span></div><div class="td" style="left:978px;width:96px"><span>0</span></div><div class="td" style="left:1074px;width:96px"></div></div>
    <div class="tr" style="top:245px;height:39px"><div class="td" style="left:0px;width:49px"><b class="ck"></b></div><div class="td" style="left:49px;width:181px"><span style="text-align:left;left:50px"><a>01649688</a></span></div><div class="td" style="left:230px;width:96px"><span>lin</span></div><div class="td" style="left:326px;width:121px"><span style="text-align:left;left:16px">1395</span></div><div class="td" style="left:447px;width:96px"><span>默认等级</span></div><div class="td" style="left:543px;width:51px"><span>保密</span></div><div class="td" style="left:594px;width:96px"></div><div class="td" style="left:690px;width:96px"><span>腕宝总部</span></div><div class="td" style="left:786px;width:96px"><span>0</span></div><div class="td" style="left:882px;width:96px"><span>0</span></div><div class="td" style="left:978px;width:96px"><span>0</span></div><div class="td" style="left:1074px;width:96px"></div></div>
    <div class="tr" style="top:284px;height:39px"><div class="td" style="left:0px;width:49px"><b class="ck"></b></div><div class="td" style="left:49px;width:181px"><span style="text-align:left;left:78px"><a>654</a></span></div><div class="td" style="left:230px;width:96px"><span>654</span></div><div class="td" style="left:326px;width:121px"><span style="text-align:left;left:16px"></span></div><div class="td" style="left:447px;width:96px"><span>默认等级</span></div><div class="td" style="left:543px;width:51px"><span>保密</span></div><div class="td" style="left:594px;width:96px"></div><div class="td" style="left:690px;width:96px"><span>博爱县旺客...</span></div><div class="td" style="left:786px;width:96px"><span>0</span></div><div class="td" style="left:882px;width:96px"><span>0</span></div><div class="td" style="left:978px;width:96px"><span>0</span></div><div class="td" style="left:1074px;width:96px"></div></div>
    <div class="tr t" style="top:323px;height:50px"><div class="td" style="left:0px;width:49px"><b class="ck"></b></div><div class="td" style="left:49px;width:181px"><span style="text-align:left;left:47px"><a>18224515<em style="width:15.8px"></em>5</a></span></div><div class="td" style="left:230px;width:96px"><b class="dot"></b><span style="margin-top:-4px">5656</span></div><div class="td" style="left:326px;width:121px"><span style="text-align:left;left:16px">1822451<em style="width:23.6px"></em>5</span></div><div class="td" style="left:447px;width:96px"><span>测试会员1级</span></div><div class="td" style="left:543px;width:51px"><span>保密</span></div><div class="td" style="left:594px;width:96px"></div><div class="td" style="left:690px;width:96px"><span>纳客专卖店...</span></div><div class="td" style="left:786px;width:96px"><span>1007.8</span></div><div class="td" style="left:882px;width:96px"><span>0</span></div><div class="td" style="left:978px;width:96px"><span>1135.7</span></div><div class="td" style="left:1074px;width:96px"></div></div>
    <div class="tr t" style="top:373px;height:50px"><div class="td" style="left:0px;width:49px"><b class="ck"></b></div><div class="td" style="left:49px;width:181px"><span style="text-align:left;left:47px"><a>156789845</a></span></div><div class="td" style="left:230px;width:96px"><b class="dot"></b><span style="margin-top:-4px">测试</span></div><div class="td" style="left:326px;width:121px"><span style="text-align:left;left:16px">15678984</span></div><div class="td" style="left:447px;width:96px"><span>默认等级</span></div><div class="td" style="left:543px;width:51px"><span>保密</span></div><div class="td" style="left:594px;width:96px"></div><div class="td" style="left:690px;width:96px"><span>腕宝总部</span></div><div class="td" style="left:786px;width:96px"><span>0</span></div><div class="td" style="left:882px;width:96px"><span>950</span></div><div class="td" style="left:978px;width:96px"><span>50</span></div><div class="td" style="left:1074px;width:96px"></div></div>
    <div class="tr" style="top:423px;height:39px"><div class="td" style="left:0px;width:49px"><b class="ck"></b></div><div class="td" style="left:49px;width:181px"><span style="text-align:left;left:47px"><a></a></span></div><div class="td" style="left:230px;width:96px"><span></span></div><div class="td" style="left:326px;width:121px"><span style="text-align:left;left:16px"></span></div><div class="td" style="left:447px;width:96px"><span></span></div><div class="td" style="left:543px;width:51px"><span></span></div><div class="td" style="left:594px;width:96px"></div><div class="td" style="left:690px;width:96px"><span></span></div><div class="td" style="left:786px;width:96px"><span></span></div><div class="td" style="left:882px;width:96px"><span></span></div><div class="td" style="left:978px;width:96px"><span></span></div><div class="td" style="left:1074px;width:96px"></div></div>
    <div class="abs" style="left:326px;top:0;width:4px;height:430px;background:linear-gradient(90deg,rgba(0,0,0,.045),rgba(0,0,0,0))"></div><div id="mos"><p style="left:162px;top:77px;width:23px;height:1px;background:#fdfdfe"></p><p style="left:155px;top:127px;width:26px;height:1px;background:#fdfdfe"></p><p style="left:154px;top:166px;width:26px;height:1px;background:#fdfdfe"></p><p style="left:154px;top:205px;width:25px;height:1px;background:#fdfdfe"></p><p style="left:153px;top:244px;width:25px;height:1px;background:#fdfdfe"></p><p style="left:154px;top:283px;width:25px;height:1px;background:#fdfdfe"></p><p style="left:156px;top:322px;width:25px;height:1px;background:#fdfdfe"></p><p style="left:159px;top:372px;width:24px;height:1px;background:#fdfdfe"></p><p style="left:408px;top:77px;width:25px;height:1px;background:#fcfcfc"></p><p style="left:395px;top:127px;width:40px;height:1px;background:#fcfcfc"></p><p style="left:385px;top:166px;width:52px;height:1px;background:#fcfcfc"></p><p style="left:374px;top:205px;width:65px;height:1px;background:#fcfcfc"></p><p style="left:374px;top:244px;width:63px;height:1px;background:#fcfcfc"></p><p style="left:377px;top:283px;width:69px;height:1px;background:#fcfcfc"></p><p style="left:385px;top:322px;width:42px;height:1px;background:#fcfcfc"></p><p style="left:398px;top:372px;width:31px;height:1px;background:#fcfcfc"></p><p style="left:167px;top:51px;width:14px;height:12px;background:#b5d0ef"></p><p style="left:181px;top:51px;width:9px;height:12px;background:#eaf2fc"></p><p style="left:164px;top:63px;width:21px;height:12px;background:#f1f6fd"></p><p style="left:158px;top:87px;width:23px;height:12px;background:#ecf3fc"></p><p style="left:158px;top:99px;width:11px;height:12px;background:#cddff5"></p><p style="left:169px;top:99px;width:12px;height:12px;background:#c0d7f2"></p><p style="left:155px;top:135px;width:12px;height:12px;background:#cfe1f6"></p><p style="left:167px;top:135px;width:12px;height:12px;background:#c6dbf4"></p><p style="left:155px;top:147px;width:24px;height:12px;background:#d2e3f7"></p><p style="left:155px;top:171px;width:24px;height:12px;background:#e0ebf9"></p><p style="left:155px;top:183px;width:12px;height:12px;background:#cddff5"></p><p style="left:167px;top:183px;width:12px;height:12px;background:#bfd6f2"></p><p style="left:154px;top:219px;width:23px;height:12px;background:#c3d9f3"></p><p style="left:154px;top:255px;width:12px;height:12px;background:#c3d9f3"></p><p style="left:166px;top:255px;width:11px;height:12px;background:#dbe8f8"></p><p style="left:154px;top:267px;width:23px;height:12px;background:#edf3fc"></p><p style="left:154px;top:292px;width:3px;height:22px;background:#dfeaf9"></p><p style="left:158px;top:339px;width:11px;height:12px;background:#d2e3f7"></p><p style="left:169px;top:339px;width:11px;height:12px;background:#c0d7f2"></p><p style="left:158px;top:351px;width:22px;height:12px;background:#eef4fc"></p><p style="left:163px;top:387px;width:9px;height:12px;background:#d8e6f8"></p><p style="left:172px;top:387px;width:9px;height:12px;background:#cadef5"></p><p style="left:163px;top:399px;width:18px;height:12px;background:#e6effa"></p><p style="left:409px;top:51px;width:12px;height:12px;background:#d0d0d0"></p><p style="left:421px;top:51px;width:12px;height:12px;background:#dedede"></p><p style="left:409px;top:63px;width:24px;height:12px;background:#f5f5f5"></p><p style="left:405px;top:87px;width:28px;height:12px;background:#f1f1f1"></p><p style="left:402px;top:99px;width:7px;height:12px;background:#ebebeb"></p><p style="left:409px;top:99px;width:12px;height:12px;background:#d3d3d3"></p><p style="left:421px;top:99px;width:12px;height:12px;background:#ececec"></p><p style="left:390px;top:135px;width:19px;height:12px;background:#ebebeb"></p><p style="left:409px;top:135px;width:12px;height:12px;background:#e0e0e0"></p><p style="left:421px;top:135px;width:12px;height:12px;background:#ededed"></p><p style="left:387px;top:147px;width:22px;height:12px;background:#e6e6e6"></p><p style="left:409px;top:147px;width:12px;height:12px;background:#dddddd"></p><p style="left:421px;top:147px;width:12px;height:12px;background:#efefef"></p><p style="left:381px;top:171px;width:52px;height:12px;background:#efefef"></p><p style="left:377px;top:183px;width:8px;height:12px;background:#e3e3e3"></p><p style="left:385px;top:183px;width:12px;height:12px;background:#d1d1d1"></p><p style="left:397px;top:183px;width:12px;height:12px;background:#e3e3e3"></p><p style="left:409px;top:183px;width:12px;height:12px;background:#d5d5d5"></p><p style="left:421px;top:183px;width:12px;height:12px;background:#e8e8e8"></p><p style="left:375px;top:255px;width:10px;height:12px;background:#ececec"></p><p style="left:385px;top:255px;width:24px;height:12px;background:#e4e4e4"></p><p style="left:409px;top:255px;width:12px;height:12px;background:#d6d6d6"></p><p style="left:421px;top:255px;width:12px;height:12px;background:#e6e6e6"></p><p style="left:385px;top:267px;width:48px;height:12px;background:#f1f1f1"></p><p style="left:393px;top:339px;width:16px;height:12px;background:#e6e6e6"></p><p style="left:409px;top:339px;width:12px;height:12px;background:#d8d8d8"></p><p style="left:421px;top:339px;width:3px;height:12px;background:#ededed"></p><p style="left:397px;top:351px;width:27px;height:12px;background:#f3f3f3"></p><p style="left:406px;top:387px;width:15px;height:12px;background:#e3e3e3"></p><p style="left:421px;top:387px;width:10px;height:12px;background:#ececec"></p><p style="left:406px;top:399px;width:25px;height:12px;background:#f1f1f1"></p></div>
  </div>
</div>
<div class="abs" style="left:1343px;top:105px;width:13px;height:642px;background:#f1f1f1"></div>
<div class="abs" style="left:1344px;top:118px;width:10px;height:319px;background:#c1c1c1"></div>
<svg class="abs" style="left:1345px;top:109px" width="9" height="5" viewBox="0 0 9 5"><path d="M0 5 L4.5 0 L9 5Z" fill="#a3a3a3"/></svg>
<svg class="abs" style="left:1345px;top:738px" width="9" height="5" viewBox="0 0 9 5"><path d="M0 0 L4.5 5 L9 0Z" fill="#505050"/></svg>
</body>
</html>
